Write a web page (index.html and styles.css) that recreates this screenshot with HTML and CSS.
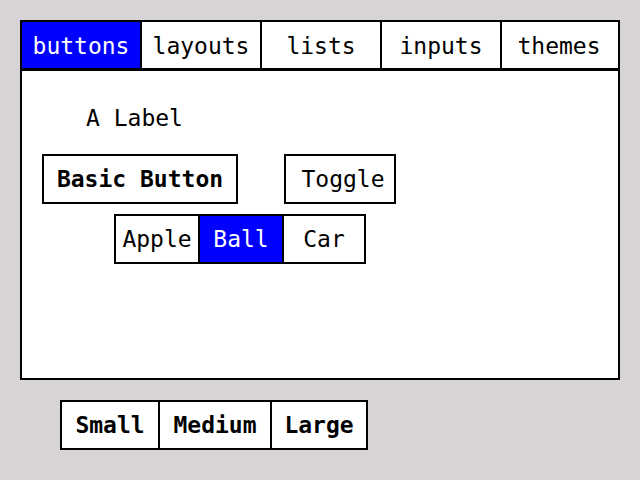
FILE: index.html
```html
<!DOCTYPE html>
<html>
<head>
<meta charset="utf-8">
<link rel="stylesheet" href="styles.css">
</head>
<body>
<div class="panel">
  <div class="tabs">
    <div class="tab active">buttons</div>
    <div class="tab">layouts</div>
    <div class="tab">lists</div>
    <div class="tab">inputs</div>
    <div class="tab">themes</div>
  </div>
  <div class="content">
    <div class="label">A Label</div>
    <div class="row">
      <div class="btn basic">Basic Button</div>
      <div class="btn toggle">Toggle</div>
    </div>
    <div class="seg">
      <div class="seg-item apple">Apple</div>
      <div class="seg-item ball active">Ball</div>
      <div class="seg-item car">Car</div>
    </div>
  </div>
</div>
<div class="sizes">
  <div class="size small">Small</div>
  <div class="size medium">Medium</div>
  <div class="size large">Large</div>
</div>
</body>
</html>
```
FILE: styles.css
```css
* { box-sizing: border-box; }
html, body { margin: 0; padding: 0; }
body {
  background: #d7d3d7;
  width: 640px;
  height: 480px;
  padding: 20px;
  font-family: "DejaVu Sans Mono", "Liberation Mono", monospace;
  font-size: 23px;
  color: #000;
  overflow: hidden;
}
.panel {
  width: 600px;
  height: 360px;
  background: #fff;
  border: 2px solid #000;
  display: flex;
  flex-direction: column;
}
.tabs {
  display: flex;
  height: 49px;
  border-bottom: 3px solid #000;
}
.tab {
  width: 120px;
  display: flex;
  align-items: center;
  justify-content: center;
  border-left: 2px solid #000;
  padding-top: 2px;
}
.tab:first-child { border-left: none; width: 118px; }
.tab:last-child { width: 116px; }
.tab.active { background: #0000ff; color: #fff; }
.content {
  display: flex;
  flex-direction: column;
  align-items: flex-start;
}
.label {
  margin: 32px 0 0 64px;
  height: 30px;
  line-height: 30px;
}
.row {
  display: flex;
  gap: 46px;
  margin: 21px 0 0 20px;
}
.btn {
  height: 50px;
  border: 2px solid #000;
  display: flex;
  align-items: center;
  justify-content: center;
}
.basic { width: 196px; font-weight: bold; }
.toggle { width: 112px; padding-left: 6px; }
.seg {
  display: flex;
  margin: 10px 0 0 92px;
  border: 2px solid #000;
  height: 50px;
}
.seg-item {
  display: flex;
  align-items: center;
  justify-content: center;
}
.apple { width: 82px; }
.ball { width: 86px; border-left: 2px solid #000; border-right: 2px solid #000; }
.car { width: 80px; }
.seg-item.active { background: #0000ff; color: #fff; }
.sizes {
  display: flex;
  margin: 20px 0 0 40px;
  width: 308px;
  height: 50px;
  border: 2px solid #000;
  background: #fff;
}
.size {
  display: flex;
  align-items: center;
  justify-content: center;
  font-weight: bold;
}
.small { width: 96px; }
.medium { width: 114px; border-left: 2px solid #000; border-right: 2px solid #000; }
.large { width: 94px; }
```
